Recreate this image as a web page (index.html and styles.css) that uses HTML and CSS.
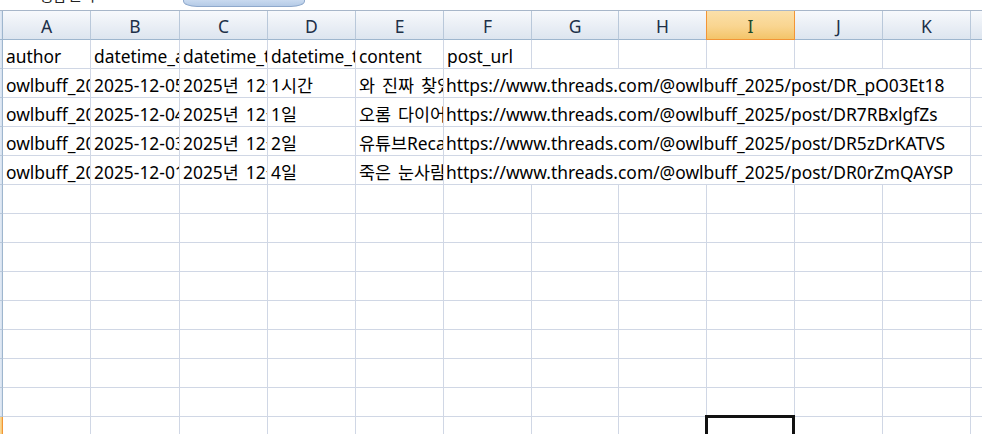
FILE: index.html
```html
<!DOCTYPE html>
<html lang="ko">
<head>
<meta charset="utf-8">
<title>Sheet</title>
<link rel="stylesheet" href="styles.css">
</head>
<body>
<div class="topbar">
  <div class="topname">통합 문서</div>
  <div class="toptab"></div>
</div>
<div class="sheet">
  <div class="rh corner"></div>
  <div class="ch">A</div><div class="ch">B</div><div class="ch">C</div><div class="ch">D</div><div class="ch">E</div><div class="ch">F</div><div class="ch">G</div><div class="ch">H</div><div class="ch sel">I</div><div class="ch">J</div><div class="ch">K</div><div class="ch rest"></div>

  <div class="rh"></div>
  <div class="c">author</div><div class="c">datetime_a</div><div class="c">datetime_t</div><div class="c">datetime_t</div><div class="c">content</div><div class="c">post_url</div><div class="c"></div><div class="c"></div><div class="c"></div><div class="c"></div><div class="c"></div><div class="c rest"></div>

  <div class="rh"></div>
  <div class="c">owlbuff_2025</div><div class="c">2025-12-05</div><div class="c">2025년 12월</div><div class="c">1시간</div><div class="c">와 진짜 찾았다</div><div class="c url">https://www.threads.com/@owlbuff_2025/post/DR_pO03Et18</div><div class="c rest"></div>

  <div class="rh"></div>
  <div class="c">owlbuff_2025</div><div class="c">2025-12-04</div><div class="c">2025년 12월</div><div class="c">1일</div><div class="c">오롬 다이어리</div><div class="c url">https://www.threads.com/@owlbuff_2025/post/DR7RBxlgfZs</div><div class="c rest"></div>

  <div class="rh"></div>
  <div class="c">owlbuff_2025</div><div class="c">2025-12-03</div><div class="c">2025년 12월</div><div class="c">2일</div><div class="c">유튜브Recap</div><div class="c url">https://www.threads.com/@owlbuff_2025/post/DR5zDrKATVS</div><div class="c rest"></div>

  <div class="rh"></div>
  <div class="c">owlbuff_2025</div><div class="c">2025-12-01</div><div class="c">2025년 12월</div><div class="c">4일</div><div class="c">죽은 눈사람</div><div class="c url">https://www.threads.com/@owlbuff_2025/post/DR0rZmQAYSP</div><div class="c rest"></div>
</div>
<div class="sheet empty" id="emptyRows"></div>
<script>
  var host = document.getElementById('emptyRows');
  for (var r = 0; r < 9; r++) {
    var rh = document.createElement('div');
    rh.className = 'rh' + (r === 8 ? ' rsel' : '');
    host.appendChild(rh);
    for (var c = 0; c < 12; c++) {
      var d = document.createElement('div');
      d.className = 'c' + (c === 11 ? ' rest' : '') + (r === 8 && c === 8 ? ' active' : '');
      host.appendChild(d);
    }
  }
</script>
</body>
</html>
```

FILE: styles.css
```css
html, body {
  margin: 0;
  padding: 0;
  background: #ffffff;
  overflow: hidden;
  width: 982px;
  height: 434px;
}

body {
  font-family: "Noto Sans", "Noto Sans CJK KR", sans-serif;
  color: #000000;
}

.topbar {
  height: 11px;
  display: flex;
  align-items: flex-start;
  overflow: hidden;
  background: #ffffff;
  border-bottom: 1px solid #a7b6c9;
  box-sizing: border-box;
}

.topname {
  margin-left: 40px;
  font-size: 15px;
  line-height: 15px;
  color: #222;
  width: 138px;
  margin-top: -12px;
  letter-spacing: -1px;
}

.toptab {
  margin-left: 5px;
  width: 120px;
  height: 6px;
  background: linear-gradient(#c9daef, #b5cbe6);
  border: 1px solid #8fa9cc;
  border-top: none;
  border-radius: 0 0 14px 14px / 0 0 6px 6px;
}

.sheet {
  display: grid;
  grid-template-columns: 3px 88px 89px 88px 88px 88px 88px 87px 88px 88px 88px 88px 1fr;
  grid-auto-rows: 29px;
}

.sheet:first-of-type {
  grid-template-rows: 30px;
}

.ch {
  box-sizing: border-box;
  background: linear-gradient(#f7f9fc, #e9eef5 55%, #dde5ef);
  border-right: 1px solid #b9c8da;
  border-bottom: 1px solid #9eb6ce;
  font-size: 17.5px;
  color: #203048;
  display: flex;
  align-items: center;
  justify-content: center;
  padding-top: 2px;
}

.ch.sel {
  background: linear-gradient(#fbe0aa, #f9d590 55%, #f3c469);
  border-right: 1px solid #f29536;
  border-left: 1px solid #f29536;
  border-bottom: 1px solid #f29536;
  margin-left: -1px;
  color: #1d4a2a;
}

.ch.rest {
  border-right: none;
}

.rh {
  box-sizing: border-box;
  background: linear-gradient(90deg, #e4ecf7, #d3deec);
  border-right: 1px solid #9eb6ce;
  border-bottom: 1px solid #b9c8da;
}

.rh.corner {
  border-bottom: 1px solid #9eb6ce;
}

.rh.rsel {
  background: linear-gradient(90deg, #fbdca0, #f5c46a);
  border-right: 1px solid #f29536;
}

.c {
  box-sizing: border-box;
  border-right: 1px solid #d0d7e5;
  border-bottom: 1px solid #d0d7e5;
  font-size: 17.4px;
  line-height: 26px;
  word-spacing: 2.5px;
  white-space: nowrap;
  overflow: hidden;
  padding-left: 3px;
  padding-top: 3px;
}

.c.url {
  grid-column: span 6;
  padding-left: 2px;
}

.c.rest {
  border-right: none;
}

.c.active {
  position: relative;
  overflow: visible;
}

.c.active::after {
  content: "";
  position: absolute;
  left: -2px;
  top: -2px;
  right: -1px;
  bottom: -2px;
  border: 3px solid #111;
}
```
